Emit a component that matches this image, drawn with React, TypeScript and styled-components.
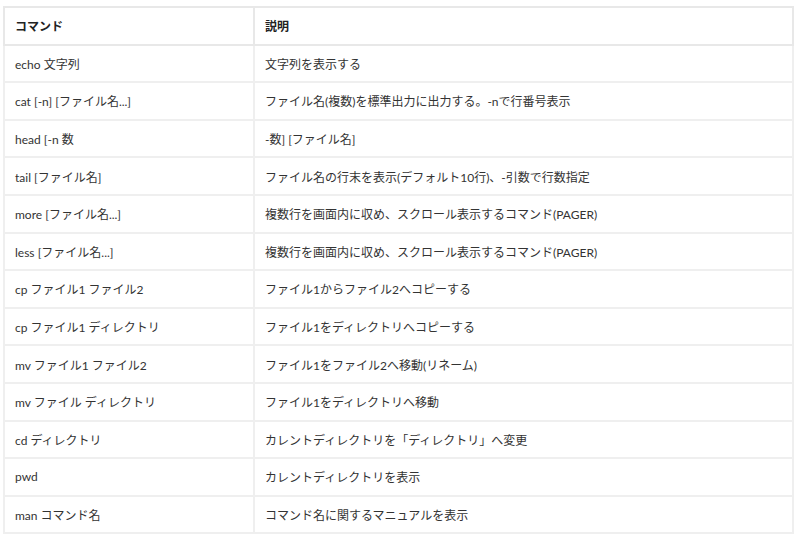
import styled, { createGlobalStyle } from 'styled-components'

const GlobalStyle = createGlobalStyle`
	html, body {
		margin: 0;
		padding: 0;
		background: #fff;
	}
`

const rows: [string, string][] = [
	['echo 文字列', '文字列を表示する'],
	['cat [-n] [ファイル名...]', 'ファイル名(複数)を標準出力に出力する。-nで行番号表示'],
	['head [-n 数', '-数] [ファイル名]'],
	['tail [ファイル名]', 'ファイル名の行末を表示(デフォルト10行)、-引数で行数指定'],
	['more [ファイル名...]', '複数行を画面内に収め、スクロール表示するコマンド(PAGER)'],
	['less [ファイル名...]', '複数行を画面内に収め、スクロール表示するコマンド(PAGER)'],
	['cp ファイル1 ファイル2', 'ファイル1からファイル2へコピーする'],
	['cp ファイル1 ディレクトリ', 'ファイル1をディレクトリへコピーする'],
	['mv ファイル1 ファイル2', 'ファイル1をファイル2へ移動(リネーム)'],
	['mv ファイル ディレクトリ', 'ファイル1をディレクトリへ移動'],
	['cd ディレクトリ', 'カレントディレクトリを「ディレクトリ」へ変更'],
	['pwd', 'カレントディレクトリを表示'],
	['man コマンド名', 'コマンド名に関するマニュアルを表示'],
]

const App = () => {
	return (
		<Page>
			<GlobalStyle />
			<Table>
				<colgroup>
					<CmdCol />
					<col />
				</colgroup>
				<thead>
					<tr>
						<Th>コマンド</Th>
						<Th>説明</Th>
					</tr>
				</thead>
				<tbody>
					{rows.map(([cmd, desc]) => (
						<tr key={cmd + desc}>
							<Td>{cmd}</Td>
							<Td>{desc}</Td>
						</tr>
					))}
				</tbody>
			</Table>
		</Page>
	)
}

const Page = styled.div`
	padding: 6px 6px 0 3px;
	font-family: Lato, 'Noto Sans CJK JP', sans-serif;
	font-size: 12px;
	color: #333;
`

const Table = styled.table`
	width: 791px;
	border-collapse: collapse;
	border: 2px solid #efefef;
	table-layout: fixed;
`

const CmdCol = styled.col`
	width: 250px;
`

const Th = styled.th`
	height: 35.6px;
	padding: 0 10px;
	text-align: left;
	font-weight: 700;
	color: #222;
	border: 2px solid #e8e8e8;
`

const Td = styled.td`
	height: 35.6px;
	padding: 0 10px;
	border: 2px solid #efefef;
	white-space: nowrap;
`

export default App
